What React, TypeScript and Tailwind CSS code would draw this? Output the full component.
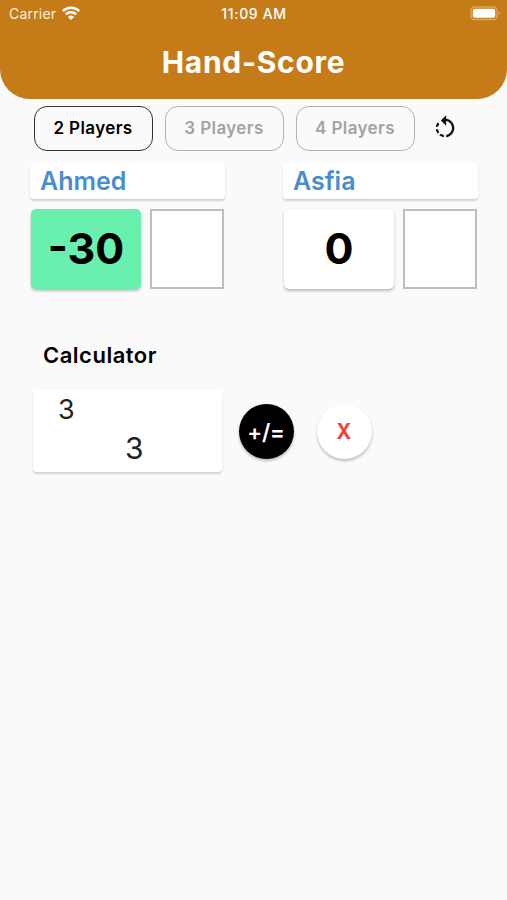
import clsx from "clsx";
import { useState } from "react";
import { MdRotateLeft } from "react-icons/md";

interface Player {
	name: string;
	score: number;
}

const PLAYERS: Player[] = [
	{ name: "Ahmed", score: -30 },
	{ name: "Asfia", score: 0 },
];

function WifiIcon() {
	return (
		<svg viewBox="0 0 18 14" className="mb-[2px] h-[14px] w-[18px]" fill="none">
			<path
				d="M.8 5.1a11.6 11.6 0 0 1 16.4 0M3.8 8.3a7.4 7.4 0 0 1 10.4 0"
				stroke="white"
				strokeWidth="2.5"
			/>
			<path d="M5.9 10.9a4.5 4.5 0 0 1 6.2 0L9 14z" fill="white" />
		</svg>
	);
}

function BatteryIcon() {
	return (
		<svg viewBox="0 0 31 15" className="mb-[2px] h-[15px] w-[31px]" fill="none">
			<rect
				x="1"
				y="1"
				width="26"
				height="12.5"
				rx="3.8"
				stroke="#dca663"
				strokeWidth="1.4"
			/>
			<rect x="2.8" y="2.8" width="22.4" height="8.9" rx="2" fill="white" />
			<path d="M28.6 5.2c1.6.6 1.6 3.5 0 4.1z" fill="#dca663" />
		</svg>
	);
}

function StatusBar() {
	return (
		<div className="grid h-7 grid-cols-3 items-center pr-[6px] pl-[9px] text-[14px] text-white">
			<div className="flex items-center gap-[6px]">
				<span className="pb-px tracking-[0.2px] text-[#fff1de]">Carrier</span>
				<WifiIcon />
			</div>
			<span className="pr-[2px] pb-px text-center text-[14px] font-medium tracking-[0.65px] whitespace-nowrap">
				11:09 AM
			</span>
			<div className="flex justify-end">
				<BatteryIcon />
			</div>
		</div>
	);
}

function PlayerColumn({ name, score }: Player) {
	return (
		<div className="w-[195px]">
			<div className="flex h-9 items-center rounded-[4px] bg-white pt-px pl-[10px] text-[25px] font-semibold text-[#488dcf] shadow-[0_2px_2px_rgba(0,0,0,0.16)]">
				{name}
			</div>
			<div className="mt-[10px] flex gap-[9px] pl-px">
				<div
					className={clsx(
						"flex h-20 w-[110px] items-center justify-center rounded-[5px] pb-[2px] text-[43px] font-bold text-black shadow-[0_2px_3px_rgba(0,0,0,0.25)]",
						score < 0 ? "bg-[#69f0ae]" : "bg-white",
					)}
				>
					{score}
				</div>
				<input
					type="text"
					aria-label={`${name} points`}
					className="h-20 w-[74px] border-2 border-[#bdbdbd] bg-white text-center outline-none"
				/>
			</div>
		</div>
	);
}

function Calculator() {
	return (
		<section className="mt-[53px] pl-[33px]">
			<h2 className="pl-[10px] text-[22px] leading-[26px] font-semibold tracking-[0.5px] text-black">
				Calculator
			</h2>
			<div className="mt-[22px] flex items-center">
				<div className="h-[82px] w-[189px] rounded-[4px] bg-white text-[#222] shadow-[0_2px_2px_rgba(0,0,0,0.16)]">
					<div className="pt-[2px] pl-[25px] text-[27px] leading-9">3</div>
					<div className="pl-[92px] text-[30px] leading-10">3</div>
				</div>
				<button
					type="button"
					className="ml-[17px] size-[55px] rounded-full bg-black pt-[2px] pr-px text-[22px] font-semibold tracking-[-0.2px] text-white shadow-[0_2px_3px_rgba(0,0,0,0.25)]"
				>
					+/=
				</button>
				<button
					type="button"
					className="ml-[23px] size-[55px] rounded-full bg-white pt-px pr-px text-[21px] font-bold text-[#f04438] shadow-[0_2px_3px_rgba(0,0,0,0.25)]"
				>
					<span className="inline-block scale-x-95">X</span>
				</button>
			</div>
		</section>
	);
}

export default function App() {
	const [count, setCount] = useState(2);

	return (
		<div className="min-h-screen w-[507px] bg-[#fafafa] font-['Inter',sans-serif]">
			<header className="h-[99px] rounded-b-[30px] bg-[#c47b18]">
				<StatusBar />
				<h1 className="pt-[14px] text-center text-[30px] leading-10 font-bold tracking-[0.7px] text-white">
					Hand-Score
				</h1>
			</header>
			<div className="mt-[7px] flex items-center gap-3 pl-[34px]">
				{[2, 3, 4].map((n) => (
					<button
						key={n}
						type="button"
						onClick={() => setCount(n)}
						className={clsx(
							"h-[45px] w-[119px] rounded-[13px] border-[1.5px] pr-px text-[17px] font-semibold tracking-[0.4px]",
							n === count
								? "border-[#333] text-black"
								: "border-[#b3b3b3] text-[#a3a3a3]",
						)}
					>
						{n} Players
					</button>
				))}
				<button
					type="button"
					aria-label="Reset scores"
					className="ml-1 pb-px"
					onClick={() => setCount(2)}
				>
					<MdRotateLeft className="size-[28px] text-[#111]" />
				</button>
			</div>
			<div className="mt-3 flex gap-[58px] pl-[30px]">
				{PLAYERS.map((player) => (
					<PlayerColumn key={player.name} {...player} />
				))}
			</div>
			<Calculator />
		</div>
	);
}
